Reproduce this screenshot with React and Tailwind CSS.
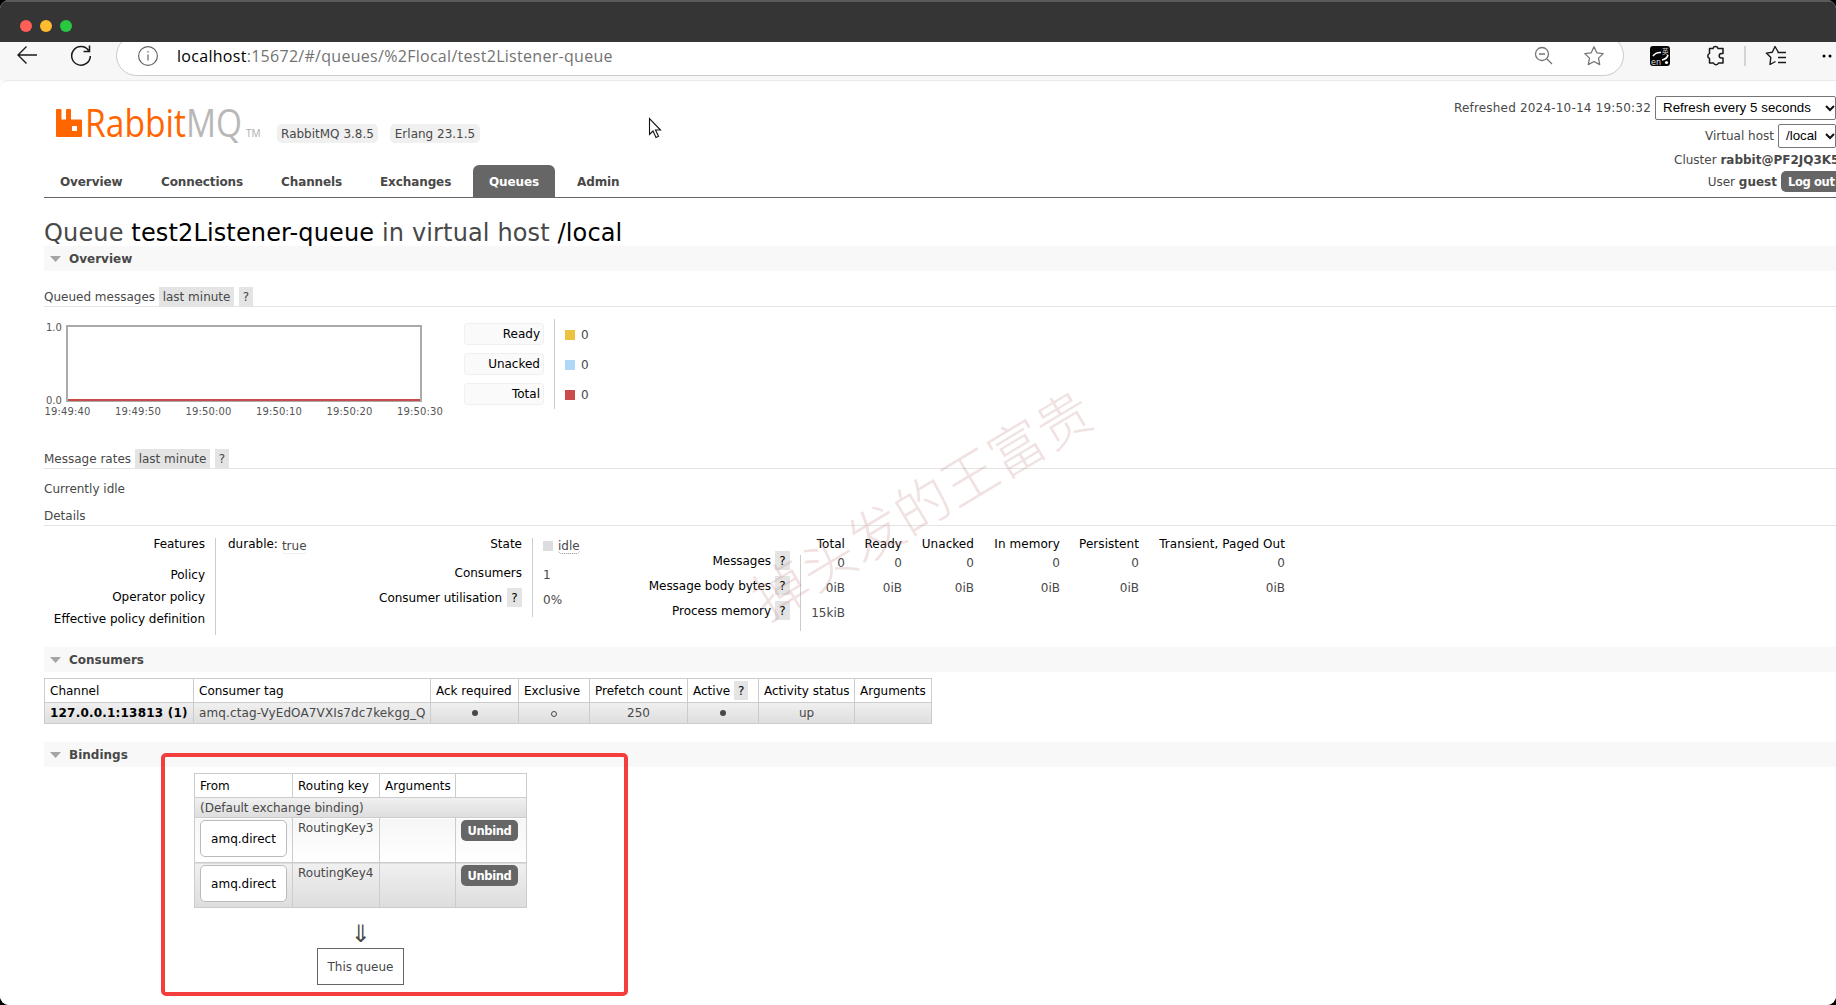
const Chip = ({ children, className = "" }) => (
  <span className={`inline-flex h-[19px] items-center justify-center bg-[#e4e4e4] ${className}`}>{children}</span>
);

const Section = ({ title, className = "" }) => (
  <div className={`flex h-[25px] shrink-0 items-center bg-[#f8f8f8] pl-[6px] font-bold ${className}`}>
    <svg width="11" height="6" className="mt-px mr-[8px]"><path d="M0 0h11L5.5 6z" fill="#a5a5a5" /></svg>
    {title}
  </div>
);

const tabs = [
  ["Overview", "w-[101px]"], ["Connections", "w-[120px]"], ["Channels", "w-[99px]"],
  ["Exchanges", "w-[109px]"], ["Queues", "w-[82px]"], ["Admin", "ml-[6px] w-[86px]"],
];

const Chrome = () => (
  <div className="flex h-[39px] shrink-0 items-start overflow-hidden bg-[#f7f7f7]">
    <svg width="21" height="22" className="mt-[2px] ml-[17px]" fill="none" stroke="#1a1a1a" strokeWidth="1.4"><path d="M20 11H1M9.500 2.500L1 11l8.500 8.500" /></svg>
    <svg width="22" height="24" className="mt-[2px] ml-[33px]" fill="none" stroke="#1a1a1a" strokeWidth="1.5"><path d="M18.600 6.500A9.3 9.3 0 1 0 20.3 12M19.500 1.500v6H13.500" /></svg>
    <div className="-mt-[7px] ml-[25px] flex h-[41px] w-[1508px] shrink-0 items-center rounded-full border border-[#cbcbcb] bg-white">
      <svg width="22" height="22" className="ml-[20px]" fill="none" stroke="#666" strokeWidth="1.2"><circle cx="11" cy="11" r="9.400" /><path d="M11 9.500v6M11 6v1.600" /></svg>
      <div className="ml-[18px] w-[700px] font-['Open_Sans',sans-serif] text-[16px] tracking-[0.29px] whitespace-nowrap text-[#737373]"><span className="text-black">localhost</span>:15672/#/queues/%2Flocal/test2Listener-queue</div>
      <svg width="20" height="20" className="ml-auto" fill="none" stroke="#767676" strokeWidth="1.3"><circle cx="8" cy="8" r="6.500" /><path d="M5 8h6M12.700 12.700L18 18" /></svg>
      <svg width="22" height="22" viewBox="0 0 22 22" className="mr-[18px] ml-[29px]" fill="none" stroke="#767676" strokeWidth="1.3" strokeLinejoin="round"><path d="M11 1.800l2.800 6 6.400.800-4.700 4.500 1.200 6.500L11 16.500l-5.700 3.100 1.200-6.500L1.800 8.600l6.400-.8z" /></svg>
    </div>
    <svg width="20" height="20" className="mt-[4px] ml-[26px] shrink-0"><rect width="20" height="20" rx="3" fill="#050505" /><text x="1" y="18.500" fontSize="8" fontFamily="DejaVu Sans" fill="#ddd">en</text><text x="12" y="7.500" fontSize="6.500" fontFamily="Noto Sans CJK SC" fill="#ccc">英</text><path d="M3 10Q6 6 11 6.500M18 9q-1 4-6 5" stroke="#fff" strokeWidth="1.600" fill="none" /><circle cx="16.500" cy="16.500" r="1.600" fill="#fff" /></svg>
    <svg width="20" height="22" viewBox="0 0 20 22" className="mt-[3px] ml-[36px] shrink-0" fill="none" stroke="#1a1a1a" strokeWidth="1.500" strokeLinejoin="round"><path d="M3.500 3.500H7a2.600 2.600 0 0 1 5 0h5v5h-1.500a2.300 2.300 0 0 0 0 4.600H17v4.800h-4.500a2.600 2.600 0 0 1-5 0h-4v-4.500a2.700 2.700 0 0 1 0-5z" /></svg>
    <div className="mt-[4px] ml-[18px] h-[20px] w-[2px] shrink-0 bg-[#d3d3d3]" />
    <svg width="22" height="22" viewBox="0 0 22 22" className="mt-[3px] ml-[19px] shrink-0" fill="none" stroke="#1a1a1a" strokeWidth="1.400" strokeLinejoin="round"><path d="M13.500 7.500L10 1.500 7.300 7.300l-6 .8L5.800 12.500 5 19.500l5.500-3M12.500 7.500h8.500M13 12.500h8M13 17.500h8" /></svg>
    <svg width="14" height="4" className="mt-[12px] ml-[35px] shrink-0"><circle cx="2" cy="2" r="1.500" /><circle cx="8" cy="2" r="1.500" /></svg>
  </div>
);

const Chevron = () => <svg width="10" height="7" className="shrink-0" fill="none" stroke="#111" strokeWidth="2"><path d="M1 1l4 4 4-4" /></svg>;

const StatusPanel = () => (
  <div className="flex flex-col items-end">
    <div className="flex h-[24px] items-center"><span className="tracking-[0.19px]">Refreshed 2024-10-14 19:50:32</span>
      <div className="ml-[4px] flex h-[24px] w-[181px] items-center rounded-[2px] border border-[#767676] bg-white pl-[7px] font-['Liberation_Sans',Arial,sans-serif] text-[13.3px] text-black"><span className="w-[162px] tracking-[0.04px]">Refresh every 5 seconds</span><Chevron /></div>
    </div>
    <div className="mt-[4px] flex h-[24px] items-center">Virtual host
      <div className="ml-[4px] flex h-[24px] w-[58px] items-center rounded-[2px] border border-[#767676] bg-white pl-[7px] font-['Liberation_Sans',Arial,sans-serif] text-[13.3px] text-black"><span className="w-[39px]">/local</span><Chevron /></div>
    </div>
    <div className="mt-[4px] flex h-[16px] w-[162px] items-center overflow-hidden whitespace-pre">Cluster <b>rabbit@PF2JQ3K5</b></div>
    <div className="mt-[3px] flex h-[21px] items-center whitespace-pre">User <b>guest</b><span className="ml-[4px] flex h-[21px] w-[55px] items-center rounded-l-[5px] bg-[#666] pl-[7px] text-[11.5px] font-bold tracking-[-0.35px] text-white">Log out</span></div>
  </div>
);

const legend = [["Ready", "bg-[#edc240]"], ["Unacked", "bg-[#afd8f8]"], ["Total", "bg-[#cb4b4b]"]];
const times = ["19:49:40", "19:49:50", "19:50:00", "19:50:10", "19:50:20", "19:50:30"];

const QueuedChart = () => (
  <div className="mt-[12px] flex h-[120px] shrink-0">
    <div className="w-[420px] pt-[6px] text-[10px] leading-[11px] text-[#555]">
      <div className="flex">
        <div className="flex h-[77px] w-[22px] flex-col justify-between pl-[2px]"><span className="-mt-[3px]">1.0</span><span className="-mb-[4px]">0.0</span></div>
        <div className="flex h-[77px] w-[356px] flex-col justify-end border-2 border-[#aaa]"><div className="-mb-px h-[2px] bg-[#cb4b4b]" /></div>
      </div>
      <div className="mt-[4px] flex w-[422px] pl-[0.5px]">{times.map((t) => <span key={t} className="w-[70.5px] shrink-0 tracking-[0.13px]">{t}</span>)}</div>
    </div>
    <div className="flex h-[90px] w-[91px] flex-col gap-[8px] border-r border-[#ccc] pt-[4px]">
      {legend.map(([l]) => <div key={l} className="flex h-[22px] w-[80px] items-center justify-end rounded-[3px] border border-[#f0f0f0] bg-[#fafafa] pr-[3px] pb-px text-black">{l}</div>)}
    </div>
    <div className="flex h-[90px] flex-col gap-[8px] pt-[5px] pl-[10px]">
      {legend.map(([l, c]) => <div key={l} className="flex h-[22px] items-center gap-[6px]"><span className={`size-[10px] ${c}`} />0</div>)}
    </div>
  </div>
);

const cols = [["Total", "0", "0iB", "15kiB", "w-[44px]"], ["Ready", "0", "0iB", "", "w-[57px]"], ["Unacked", "0", "0iB", "", "w-[72px]"], ["In memory", "0", "0iB", "", "w-[86px]"], ["Persistent", "0", "0iB", "", "w-[79px]"], ["Transient, Paged Out", "0", "0iB", "", "w-[146px]"]];

const Details = () => (
  <div className="mt-[12px] flex h-[109px] shrink-0">
    <div className="flex h-[97px] w-[172px] flex-col items-end border-r border-[#ccc] pr-[10px] leading-[14px] text-black">
      <span className="-mt-px">Features</span><span className="mt-[17px]">Policy</span><span className="mt-[8px]">Operator policy</span><span className="mt-[8px] tracking-[-0.03px]">Effective policy definition</span>
    </div>
    <div className="-mt-px flex w-[138px] gap-[4px] pl-[12px] leading-[14px]"><span className="text-black">durable:</span><span className="mt-[2px] h-[15px] rounded-[4px] border-b border-dotted border-[#ddd]">true</span></div>
    <div className="flex h-[79px] w-[179px] flex-col items-end border-r border-[#ccc] pr-[10px] leading-[14px] text-black">
      <span className="-mt-px">State</span><span className="mt-[15px]">Consumers</span><span className="mt-[8px] flex items-center gap-[5px]"><span className="tracking-[-0.05px]">Consumer utilisation</span><Chip className="w-[15px]">?</Chip></span>
    </div>
    <div className="w-[90px] pt-px pl-[10px] leading-[14px]">
      <div className="flex gap-[5px]"><span className="mt-[2px] size-[10px] bg-[#ddd]" /><span className="h-[15px] rounded-[4px] border-b border-dotted border-[#888]">idle</span></div>
      <div className="mt-[14px]">1</div><div className="mt-[11px]">0%</div>
    </div>
    <div className="w-[167px] pt-[13px] text-black">
      {["Messages", "Message body bytes", "Process memory"].map((l) => <div key={l} className="mb-[6px] flex h-[19px] items-center justify-end gap-[4px] tracking-[-0.04px]">{l}<Chip className="w-[15px]">?</Chip></div>)}
    </div>
    <div className="mt-[17px] ml-[10px] h-[76px] w-px bg-[#ccc]" />
    {cols.map(([h, a, b, c, w]) => (
      <div key={h} className={`-mt-px flex shrink-0 flex-col items-end leading-[14px] whitespace-nowrap ${w}`}><span className="tracking-[0.06px] text-black">{h}</span><span className="mt-[5px]">{a}</span><span className="mt-[11px]">{b}</span><span className="mt-[11px]">{c}</span></div>
    ))}
  </div>
);

const th = "border border-[#ccc] px-[5px] text-left font-normal text-black";
const td = "border-x border-[#ccc] px-[5px]";
const alt = "bg-linear-to-b from-[#f0f0f0] to-[#dddddd]";

const Consumers = () => (
  <table className="mt-[6px] w-[888px] table-fixed border-collapse border border-[#ccc] whitespace-nowrap">
    <colgroup><col className="w-[149px]" /><col className="w-[237px]" /><col className="w-[88px]" /><col className="w-[71px]" /><col className="w-[98px]" /><col className="w-[71px]" /><col className="w-[96px]" /><col className="w-[77px]" /></colgroup>
    <thead><tr className="h-[24px]">{["Channel", "Consumer tag", "Ack required", "Exclusive", "Prefetch count", "Active", "Activity status", "Arguments"].map((h) => <th key={h} className={th}>{h}{h === "Active" && <Chip className="ml-[4px] w-[14px]">?</Chip>}</th>)}</tr></thead>
    <tbody><tr className={`h-[21px] text-center ${alt}`}><td className={`${td} text-left font-bold tracking-[0.2px] text-black`}>127.0.0.1:13813 (1)</td><td className={`${td} text-left tracking-[0.12px]`}>amq.ctag-VyEdOA7VXIs7dc7kekgg_Q</td><td className={td}><i className="inline-block size-[6px] rounded-full bg-[#484848] align-[1px]" /></td><td className={td}><i className="inline-block size-[6px] rounded-full border border-[#484848]" /></td><td className={td}>250</td><td className={td}><i className="inline-block size-[6px] rounded-full bg-[#484848] align-[1px]" /></td><td className={td}>up</td><td className={td} /></tr></tbody>
  </table>
);

const Bindings = () => (
  <div className="mt-[6px] ml-[150px] flex w-[333px] flex-col items-center">
    <table className="w-[333px] table-fixed border-collapse border border-[#ccc] whitespace-nowrap">
      <colgroup><col className="w-[98px]" /><col className="w-[87px]" /><col className="w-[76px]" /><col className="w-[71px]" /></colgroup>
      <thead><tr className="h-[24px]"><th className={th}>From</th><th className={th}>Routing key</th><th className={th}>Arguments</th><th className={th} /></tr></thead>
      <tbody>
        <tr className={`h-[20px] ${alt}`}><td className={td} colSpan="4">(Default exchange binding)</td></tr>
        {["RoutingKey3", "RoutingKey4"].map((k, i) => (
          <tr key={k} className={`h-[45px] border-t border-[#ccc] align-top ${i ? alt : "bg-linear-to-b from-[#f6f6f6] to-white"}`}>
            <td className={`${td} pt-[2px]`}><div className="flex h-[37px] w-[87px] items-center justify-center rounded-[5px] border border-[#bbb] bg-white text-black">amq.direct</div></td>
            <td className={`${td} pt-[3px] leading-[15px]`}>{k}</td><td className={td} />
            <td className={`${td} pt-[2px]`}><div className="flex h-[21px] w-[57px] items-center justify-center rounded-[5px] bg-[#666] text-[11.5px] font-bold tracking-[-0.35px] text-white">Unbind</div></td>
          </tr>
        ))}
      </tbody>
    </table>
    <div className="mt-[13px] h-[27px] text-[24px] leading-[26px]">⇓</div>
    <div className="flex h-[37px] w-[87px] items-center justify-center border border-[#666]">This queue</div>
  </div>
);

const SubHead = ({ label, chips = true, className = "" }) => (
  <div className={`flex h-[20px] shrink-0 items-center border-b border-[#e4e4e4] ${className}`}>{label}{chips && <><Chip className="ml-[4px] w-[75px]">last minute</Chip><Chip className="ml-[5px] w-[14px]">?</Chip></>}</div>
);

export default function App() {
  return (
    <div className="relative h-[1005px] w-[1836px] overflow-hidden bg-black font-['DejaVu_Sans',Verdana,sans-serif] text-[12px] leading-[16px] text-[#484848]">
      <div className="flex h-full flex-col overflow-hidden rounded-[9px] bg-white">
        <div className="flex h-[42px] shrink-0 items-center gap-[6px] border-t-2 border-[#5a5a5a] bg-[#353535] pt-[8px] pl-[20px]">
          <span className="size-[12px] rounded-full bg-[#ff5f57]" /><span className="ml-[2px] size-[12px] rounded-full bg-[#febc2e]" /><span className="ml-[2px] size-[12px] rounded-full bg-[#28c840]" />
        </div>
        <Chrome />
        <main className="-mt-px flex flex-1 flex-col rounded-tl-[8px] border-t border-[#eaeaea] bg-white pl-[44px]">
          <div className="flex h-[117px] shrink-0 justify-between border-b border-[#666]">
            <div className="flex flex-col">
              <div className="flex h-[84px] items-start">
                <svg width="210" height="50" className="mt-[16px] ml-[12px]">
                  <path d="M1 12h3.500q1 0 1 1v9.500H10V13q0-1 1-1h3q1 0 1 1v9.500h10q1 0 1 1V39q0 1-1 1H1q-1 0-1-1V13q0-1 1-1zM16 29v5h5v-5z" fill="#f60" fillRule="evenodd" />
                  <text x="29" y="40" fontFamily="Open Sans" fontSize="38" fill="#f60" textLength="101" lengthAdjust="spacingAndGlyphs">Rabbit</text>
                  <text x="130" y="40" fontFamily="Open Sans" fontSize="38" fill="#b8b8b8" textLength="56" lengthAdjust="spacingAndGlyphs">MQ</text>
                  <text x="190" y="40" fontFamily="Open Sans" fontSize="10" fill="#aaa">TM</text>
                </svg>
                <span className="mt-[43px] ml-[11px] flex h-[19px] w-[101px] items-center justify-center rounded-[5px] bg-[#f0f0f0]">RabbitMQ 3.8.5</span>
                <span className="mt-[43px] ml-[12px] flex h-[19px] w-[90px] items-center justify-center rounded-[5px] bg-[#f0f0f0]">Erlang 23.1.5</span>
              </div>
              <nav className="flex h-[32px]">{tabs.map(([t, w]) => <div key={t} className={`flex items-center rounded-t-[6px] pt-px pl-[16px] font-bold tracking-[-0.1px] ${w} ${t === "Queues" ? "bg-[#666] text-white" : ""}`}>{t}</div>)}</nav>
            </div>
            <div className="h-[115px] pt-[15px]"><StatusPanel /></div>
          </div>
          <h1 className="h-[48px] shrink-0 pt-[21px] text-[24px] leading-[28px] tracking-[0.14px] whitespace-nowrap">Queue <span className="text-black">test2Listener-queue</span> in virtual host <span className="text-black">/local</span></h1>
          <Section title="Overview" />
          <SubHead label="Queued messages" className="mt-[16px]" />
          <QueuedChart />
          <SubHead label="Message rates" className="mt-[10px]" />
          <div className="mt-[12px]">Currently idle</div>
          <SubHead label="Details" chips={false} className="mt-[9px]" />
          <Details />
          <Section title="Consumers" />
          <Consumers />
          <Section title="Bindings" className="mt-[18px]" />
          <Bindings />
        </main>
      </div>
      <div className="pointer-events-none absolute top-[753px] left-[161px] h-[243px] w-[467px] rounded-[5px] border-4 border-[#f43e3e]" />
      <div className="pointer-events-none absolute top-[475px] left-[728px] -rotate-[31deg] font-['Noto_Sans_CJK_SC',sans-serif] text-[55px] leading-[54px] font-light whitespace-nowrap text-[#c98a8a]/25">掉头发的王富贵</div>
      <svg width="14" height="24" className="absolute top-[117px] left-[648px]"><path d="M1.500 1.500v16l3.500-3.500 3 6.500 2.500-1.200-3-6.300h5z" fill="#fff" stroke="#111" strokeWidth="1.100" /></svg>
    </div>
  );
}
